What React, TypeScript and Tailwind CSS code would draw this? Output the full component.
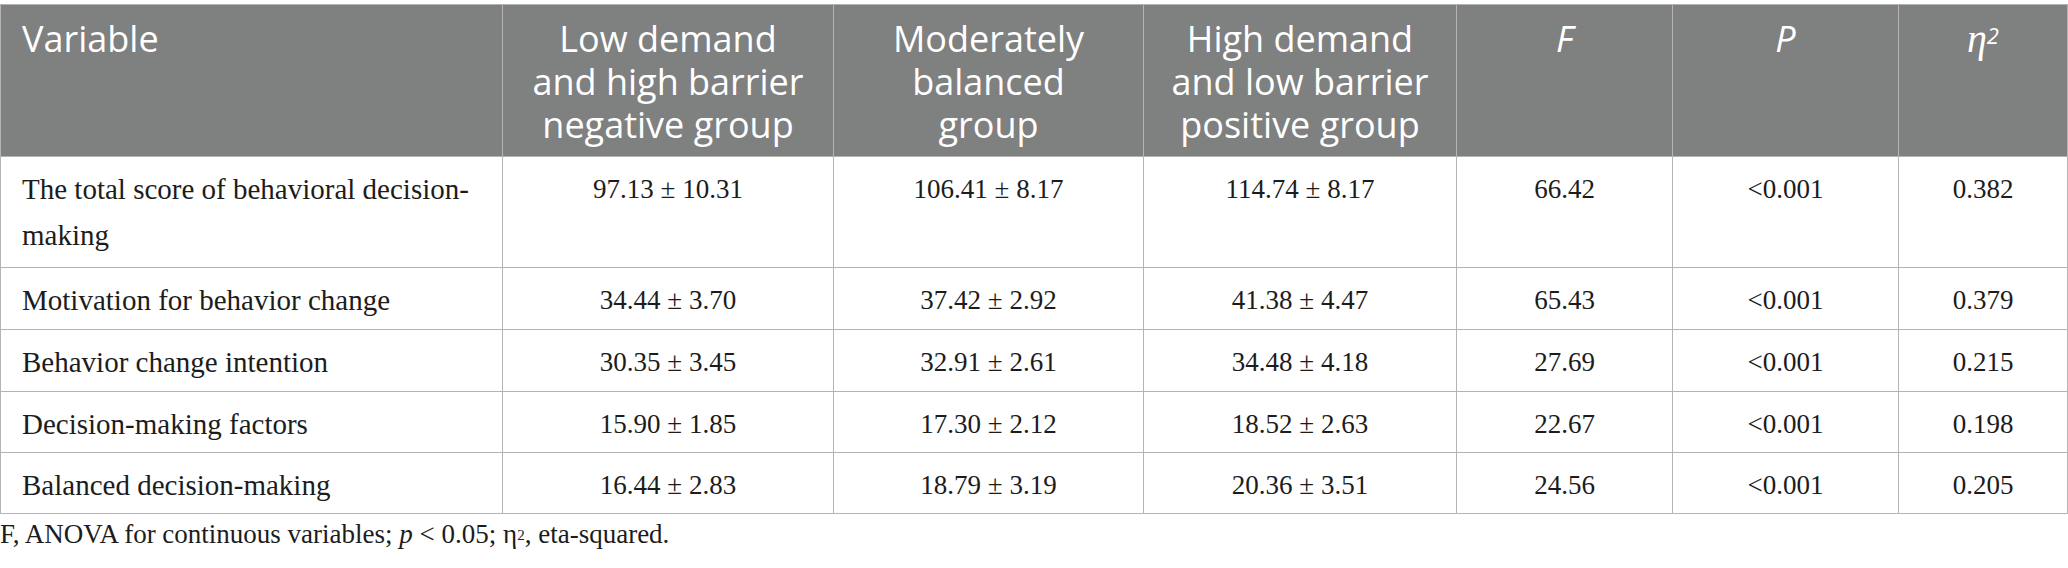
import React from 'react'

const COL_WIDTHS = ['w-[502px]', 'w-[331px]', 'w-[310px]', 'w-[313px]', 'w-[216px]', 'w-[226px]', 'w-[169px]']

interface Row {
  label: string[]
  values: string[]
  height: string
}

const ROWS: Row[] = [
  {
    label: ['The total score of behavioral decision-', 'making'],
    values: ['97.13 ± 10.31', '106.41 ± 8.17', '114.74 ± 8.17', '66.42', '<0.001', '0.382'],
    height: 'h-[111px]',
  },
  {
    label: ['Motivation for behavior change'],
    values: ['34.44 ± 3.70', '37.42 ± 2.92', '41.38 ± 4.47', '65.43', '<0.001', '0.379'],
    height: 'h-[62px]',
  },
  {
    label: ['Behavior change intention'],
    values: ['30.35 ± 3.45', '32.91 ± 2.61', '34.48 ± 4.18', '27.69', '<0.001', '0.215'],
    height: 'h-[62px]',
  },
  {
    label: ['Decision-making factors'],
    values: ['15.90 ± 1.85', '17.30 ± 2.12', '18.52 ± 2.63', '22.67', '<0.001', '0.198'],
    height: 'h-[61px]',
  },
  {
    label: ['Balanced decision-making'],
    values: ['16.44 ± 2.83', '18.79 ± 3.19', '20.36 ± 3.51', '24.56', '<0.001', '0.205'],
    height: 'h-[61px]',
  },
]

const GROUP_HEADERS = [
  ['Low demand', 'and high barrier', 'negative group'],
  ['Moderately', 'balanced', 'group'],
  ['High demand', 'and low barrier', 'positive group'],
]

const th = "h-[152px] align-top pt-[12px] px-[12px] border border-[#b4b4b4] text-[36px] leading-[43px] font-normal text-white"
const td = "align-top pt-[9px] px-[21px] border border-[#b4b4b4] leading-[46px] text-[#1c1c1c]"

function Lines({ lines }: { lines: string[] }) {
  return (
    <>
      {lines.map((l, i) => (
        <React.Fragment key={i}>
          {i > 0 && <br />}
          {l}
        </React.Fragment>
      ))}
    </>
  )
}

export default function App() {
  return (
    <div className="w-[2068px] bg-white pt-[4px]">
      <table className="table-fixed border-collapse w-[2067px]">
        <colgroup>
          {COL_WIDTHS.map((w) => (
            <col key={w} className={w} />
          ))}
        </colgroup>
        <thead className="bg-[#7f8080] font-['Open_Sans',sans-serif]">
          <tr>
            <th className={`${th} text-left !px-[21px]`}>Variable</th>
            {GROUP_HEADERS.map((g, i) => (
              <th key={i} className={`${th} text-center`}>
                <Lines lines={g} />
              </th>
            ))}
            <th className={`${th} text-center italic`}>F</th>
            <th className={`${th} text-center italic`}>P</th>
            <th className={`${th} text-center`}>
              <span className="font-['Liberation_Serif',serif] italic text-[40px]">η</span>
              <sup className="text-[22px] italic relative -top-[8px]">2</sup>
            </th>
          </tr>
        </thead>
        <tbody className="font-['Liberation_Serif',serif]">
          {ROWS.map((row) => (
            <tr key={row.label.join(' ')} className={row.height}>
              <td className={`${td} text-left text-[29px]`}>
                <Lines lines={row.label} />
              </td>
              {row.values.map((v, i) => (
                <td key={i} className={`${td} text-center text-[27px]`}>
                  {v}
                </td>
              ))}
            </tr>
          ))}
        </tbody>
      </table>
      <p className="mt-[5px] font-['Liberation_Serif',serif] text-[27px] leading-[30px] text-[#1c1c1c]">
        F, ANOVA for continuous variables; <i>p</i> &lt; 0.05; η<sup className="text-[15px] relative -top-[3px]">2</sup>, eta-squared.
      </p>
    </div>
  )
}
